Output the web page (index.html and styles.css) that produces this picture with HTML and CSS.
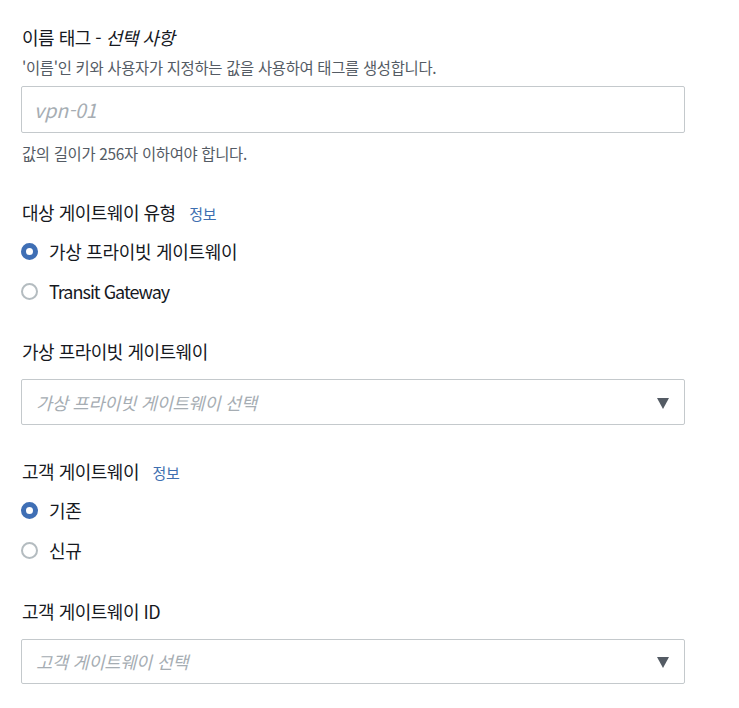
FILE: index.html
```html
<!DOCTYPE html>
<html lang="ko">
<head>
<meta charset="utf-8">
<link rel="stylesheet" href="styles.css">
</head>
<body>
<div class="form">
  <div class="title">이름 태그 - <i>선택 사항</i></div>
  <div class="desc">'이름'인 키와 사용자가 지정하는 값을 사용하여 태그를 생성합니다.</div>
  <div class="input"><span class="ph ph-latin">vpn-01</span></div>
  <div class="hint">값의 길이가 256자 이하여야 합니다.</div>

  <div class="label sec2">대상 게이트웨이 유형 <span class="info">정보</span></div>
  <div class="radios">
    <div class="radio"><span class="dot on"></span><span class="rtext">가상 프라이빗 게이트웨이</span></div>
    <div class="radio"><span class="dot"></span><span class="rtext latin">Transit Gateway</span></div>
  </div>

  <div class="label sec3">가상 프라이빗 게이트웨이</div>
  <div class="select"><span class="ph">가상 프라이빗 게이트웨이 선택</span><span class="caret"></span></div>

  <div class="label sec4">고객 게이트웨이 <span class="info">정보</span></div>
  <div class="radios">
    <div class="radio"><span class="dot on"></span><span class="rtext">기존</span></div>
    <div class="radio"><span class="dot"></span><span class="rtext">신규</span></div>
  </div>

  <div class="label sec5">고객 게이트웨이 <span class="latin">ID</span></div>
  <div class="select last"><span class="ph">고객 게이트웨이 선택</span><span class="caret"></span></div>
</div>
</body>
</html>
```

FILE: styles.css
```css
* { box-sizing: border-box; }
html, body { margin: 0; padding: 0; background: #fff; }
body {
  font-family: "Noto Sans CJK KR", "Noto Sans", sans-serif;
  color: #16191f;
}
.form {
  width: 664px;
  margin-left: 21px;
  display: flex;
  flex-direction: column;
}
.title {
  margin-top: 26px;
  height: 22px;
  line-height: 22px;
  font-size: 18px;
  letter-spacing: -0.5px;
  padding-left: 1px;
}
.title i { font-style: italic; }
.desc {
  margin-top: 9px;
  height: 20px;
  line-height: 20px;
  font-size: 15.4px;
  letter-spacing: -0.3px;
  color: #545b64;
  padding-left: 1px;
}
.input {
  margin-top: 9px;
  height: 47px;
  border: 1px solid #c4c9cc;
  border-radius: 2px;
  display: flex;
  align-items: center;
  padding-left: 12px;
}
.ph {
  font-style: italic;
  color: #a6adb3;
  font-size: 17.5px;
  letter-spacing: -0.2px;
}
.ph-latin { font-size: 19.5px; letter-spacing: 0; }
.hint {
  margin-top: 10px;
  height: 20px;
  line-height: 20px;
  font-size: 15.4px;
  letter-spacing: -0.3px;
  color: #545b64;
  padding-left: 1px;
}
.label {
  height: 24px;
  line-height: 24px;
  font-size: 18px;
  letter-spacing: -0.5px;
  padding-left: 1px;
}
.sec2 { margin-top: 37px; }
.sec3 { margin-top: 28px; }
.sec4 { margin-top: 34px; }
.sec5 { margin-top: 29px; }
.info {
  font-size: 15px;
  color: #3e6fb0;
  margin-left: 9px;
  letter-spacing: -0.2px;
}
.latin { letter-spacing: -0.5px; }
.radios {
  margin-top: 7px;
  display: flex;
  flex-direction: column;
}
.radio {
  height: 40px;
  display: flex;
  align-items: center;
  gap: 11px;
}
.dot {
  width: 17px;
  height: 17px;
  border-radius: 50%;
  border: 2px solid #b4bcc0;
  background: #fff;
  flex: none;
}
.dot.on {
  border: 5px solid #3f6fb5;
}
.rtext {
  font-size: 18px;
  letter-spacing: -0.3px;
  line-height: 24px;
}
.rtext.latin { letter-spacing: -1px; }
.select {
  margin-top: 16px;
  height: 46px;
  border: 1px solid #c4c9cc;
  border-radius: 2px;
  display: flex;
  align-items: center;
  justify-content: space-between;
  padding-left: 14px;
  padding-right: 15px;
}
.select.last { height: 45px; }
.caret {
  width: 0;
  height: 0;
  border-left: 6px solid transparent;
  border-right: 6px solid transparent;
  border-top: 11px solid #545b64;
  margin-top: 2px;
}
```
